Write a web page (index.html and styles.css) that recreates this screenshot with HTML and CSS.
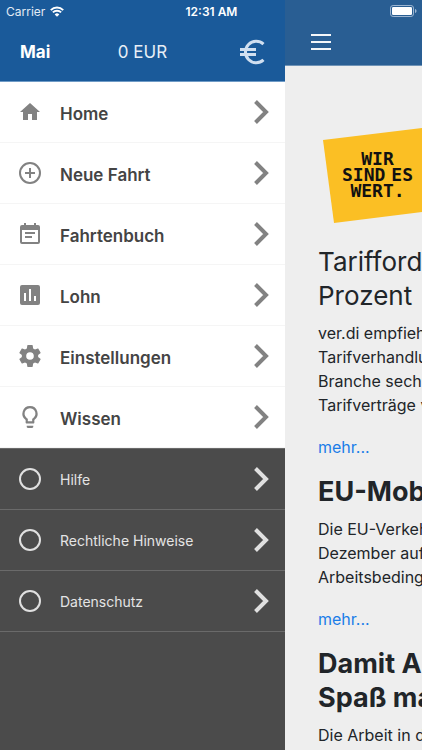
FILE: index.html
```html
<!DOCTYPE html>
<html lang="de">
<head>
<meta charset="utf-8">
<meta name="viewport" content="width=device-width, initial-scale=1">
<title>Home</title>
<link rel="stylesheet" href="styles.css">
</head>
<body>
<svg class="symbols" aria-hidden="true">
  <symbol id="chevron" viewBox="0 0 16 26"><path d="M2.5 2.5 13 13 2.5 23.5" fill="none" stroke="currentColor" stroke-width="4"/></symbol>
  <symbol id="ring" viewBox="0 0 24 24"><circle cx="12" cy="12" r="10" fill="none" stroke="currentColor" stroke-width="2"/></symbol>
</svg>
<div class="app">
  <div class="status">
    <span class="carrier">Carrier
      <svg width="14" height="11" viewBox="0 0 14 11" aria-hidden="true"><path d="M.8 4.1a8.8 8.8 0 0 1 12.4 0M2.9 6.4a5.8 5.8 0 0 1 8.2 0" fill="none" stroke="#fff" stroke-width="2"/><path d="M7 10.8 4.7 8.4a3.3 3.3 0 0 1 4.6 0z" fill="#fff"/></svg>
    </span>
    <span class="time">12:31 AM</span>
    <svg class="battery" width="27" height="12" viewBox="0 0 27 12" aria-hidden="true"><rect x=".5" y=".5" width="23" height="11" rx="2.6" fill="none" stroke="#9db6d2"/><rect x="2" y="2" width="20" height="8" rx="1.2" fill="#fff"/><path d="M25 4v4c2-.6 2-3.400 0-4z" fill="#9db6d2"/></svg>
  </div>

  <aside class="drawer">
    <header class="summary">
      <strong class="month">Mai</strong>
      <span class="amount">0 EUR</span>
      <svg class="euro" width="26" height="26" viewBox="0 0 26 26" aria-hidden="true"><path d="M24.500 5.200A10.700 10.700 0 1 0 24.500 20.800M1 10.500h16M1 15.500h16" fill="none" stroke="currentColor" stroke-width="3"/></svg>
    </header>
    <nav class="menu">
      <a class="item" href="#home">
        <svg class="icon" viewBox="0 0 24 24"><path d="M10 20v-6h4v6h5v-8h3L12 3 2 12h3v8z"/></svg>
        <span>Home</span><svg class="chevron"><use href="#chevron"/></svg>
      </a>
      <a class="item" href="#fahrt">
        <svg class="icon" viewBox="0 0 24 24"><path d="M13 7h-2v4H7v2h4v4h2v-4h4v-2h-4V7zm-1-6a11 11 0 1 0 0 22 11 11 0 0 0 0-22zm0 20a9 9 0 1 1 0-18 9 9 0 0 1 0 18z"/></svg>
        <span>Neue Fahrt</span><svg class="chevron"><use href="#chevron"/></svg>
      </a>
      <a class="item" href="#fahrtenbuch">
        <svg class="icon" viewBox="0 0 24 24"><path d="M17 10H7v2h10v-2zm3-7h-2V1h-2v2H8V1H6v2H4a2 2 0 0 0-2 2v15a2 2 0 0 0 2 2h16a2 2 0 0 0 2-2V5a2 2 0 0 0-2-2zm0 17H4V8h16v12zm-6-6H7v2h7v-2z"/></svg>
        <span>Fahrtenbuch</span><svg class="chevron"><use href="#chevron"/></svg>
      </a>
      <a class="item" href="#lohn">
        <svg class="icon" viewBox="0 0 24 24"><path d="M20 2H4a2 2 0 0 0-2 2v16a2 2 0 0 0 2 2h16a2 2 0 0 0 2-2V4a2 2 0 0 0-2-2zM8 18H6v-8h2v8zm5 0h-2V6h2v12zm5 0h-2v-5h2v5z"/></svg>
        <span>Lohn</span><svg class="chevron"><use href="#chevron"/></svg>
      </a>
      <a class="item" href="#einstellungen">
        <svg class="icon" viewBox="1 1 22 22"><path d="M19.430 12.980c.04-.32.070-.64.070-.98s-.03-.66-.07-.98l2.110-1.650c.19-.15.240-.42.120-.64l-2-3.460c-.12-.22-.39-.3-.61-.22l-2.490 1c-.52-.4-1.080-.73-1.690-.98l-.38-2.650C14.460 2.180 14.250 2 14 2h-4c-.25 0-.46.180-.49.420l-.38 2.650c-.61.250-1.170.590-1.690.980l-2.490-1c-.23-.09-.49 0-.61.220l-2 3.460c-.13.220-.07.490.12.640l2.110 1.650c-.04.320-.07.650-.07.980s.03.660.07.980l-2.110 1.650c-.19.150-.24.420-.12.640l2 3.460c.12.220.39.300.61.220l2.490-1c.52.400 1.080.730 1.690.980l.38 2.650c.03.240.24.420.49.420h4c.25 0 .46-.18.490-.42l.38-2.650c.61-.25 1.170-.59 1.690-.98l2.490 1c.23.090.49 0 .61-.22l2-3.460c.12-.22.070-.49-.12-.64l-2.110-1.650zM12 15.500a3.500 3.500 0 1 1 0-7 3.500 3.500 0 0 1 0 7z"/></svg>
        <span>Einstellungen</span><svg class="chevron"><use href="#chevron"/></svg>
      </a>
      <a class="item" href="#wissen">
        <svg class="icon" viewBox="1 1 22 22"><path d="M9 21c0 .55.450 1 1 1h4c.55 0 1-.45 1-1v-1H9v1zm3-19a7 7 0 0 0-4 12.740V17c0 .55.450 1 1 1h6c.55 0 1-.45 1-1v-2.260A7 7 0 0 0 12 2zm2.850 11.100-.85.600V16h-4v-2.300l-.85-.6a5 5 0 1 1 5.700 0z"/></svg>
        <span>Wissen</span><svg class="chevron"><use href="#chevron"/></svg>
      </a>
    </nav>
    <nav class="menu menu-dark">
      <a class="item" href="#hilfe"><svg class="icon"><use href="#ring"/></svg><span>Hilfe</span><svg class="chevron"><use href="#chevron"/></svg></a>
      <a class="item" href="#recht"><svg class="icon"><use href="#ring"/></svg><span>Rechtliche Hinweise</span><svg class="chevron"><use href="#chevron"/></svg></a>
      <a class="item" href="#datenschutz"><svg class="icon"><use href="#ring"/></svg><span>Datenschutz</span><svg class="chevron"><use href="#chevron"/></svg></a>
    </nav>
  </aside>

  <div class="page">
    <header class="topbar">
      <button class="toggle" type="button" aria-label="Menü"><i></i><i></i><i></i></button>
    </header>
    <main class="content">
      <div class="banner">
        <span>WIR</span>
        <span class="words"><span>SIND</span><span>ES</span></span>
        <span>WERT.</span>
      </div>
      <article>
        <h2 class="light">Tarifford<br>Prozent</h2>
        <p>ver.di empfieh<br>Tarifverhandlu<br>Branche sechs<br>Tarifverträge v</p>
        <a class="more" href="#tarif">mehr...</a>
      </article>
      <article>
        <h2>EU-Mob</h2>
        <p>Die EU-Verkeh<br>Dezember auf<br>Arbeitsbeding</p>
        <a class="more" href="#eu">mehr...</a>
      </article>
      <article>
        <h2>Damit A<br>Spaß ma</h2>
        <p>Die Arbeit in d</p>
      </article>
    </main>
  </div>
</div>
</body>
</html>
```
FILE: styles.css
```css
* { box-sizing: border-box; }

body {
  margin: 0;
  font-family: Inter, "Liberation Sans", sans-serif;
  font-size: 16px;
  color: #212529;
  background: #eee;
}

a { text-decoration: none; }

.symbols { position: absolute; width: 0; height: 0; }

.app {
  position: relative;
  display: flex;
  height: 100vh;
  overflow: hidden;
}

/* Status bar lies over both headers */
.status {
  position: absolute;
  inset: 0 0 auto;
  display: grid;
  grid-template-columns: 1fr auto 1fr;
  align-items: center;
  height: 22px;
  padding: 0 5px 0 6px;
  color: #fff;
  font-size: 12px;
}
.carrier { display: flex; align-items: center; gap: 5px; color: #e3ebf4; }
.time { font-weight: 600; }
.battery { justify-self: end; }

/* Drawer */
.drawer {
  flex: none;
  width: 285px;
  background: #4b4b4b;
}
.summary {
  display: grid;
  grid-template-columns: 1fr auto 1fr;
  align-items: center;
  height: 82px;
  padding: 22px 20px 0;
  background: #1a5a9a;
  border-bottom: 1px solid #6f9bc6;
  color: #fff;
}
.month { font-size: 17px; font-weight: 700; }
.amount { font-size: 17px; color: #e8eff6; }
.euro { justify-self: end; color: #d0dff0; }

.item {
  display: flex;
  align-items: center;
  gap: 18px;
  height: 61px;
  padding: 0 16px 0 18px;
  border-bottom: 1px solid #f5f5f5;
  color: #444;
  font-size: 17px;
  font-weight: 600;
}
.menu { background: #fff; }
.item span { flex: 1; padding-top: 4px; }
.icon { width: 24px; height: 24px; fill: #828282; }
.chevron { width: 16px; height: 26px; color: #828282; }

.menu-dark {
  background: #4b4b4b;
  border-top: 1px solid #6a6a6a;
}
.menu-dark .item {
  border-color: #6a6a6a;
  color: #e4e4e4;
  font-size: 14px;
  font-weight: 400;
}
.menu-dark .item span { padding-top: 0; }
.menu-dark .icon,
.menu-dark .chevron { color: #e0e0e0; }

/* Page behind the drawer */
.page {
  flex: 1;
  min-width: 0;
  overflow: hidden;
  background: #eee;
}
.topbar {
  height: 66px;
  padding: 34px 26px 0;
  background: #295e93;
  border-bottom: 1px solid #6f93b6;
}
.toggle {
  display: flex;
  flex-direction: column;
  gap: 5px;
  width: 20px;
  padding: 0;
  border: 0;
  background: none;
}
.toggle i { height: 2px; background: #f4f7fa; }

.content {
  padding: 62px 0 0 33px;
  white-space: nowrap;
}
.banner {
  display: flex;
  flex-direction: column;
  align-items: center;
  height: 95px;
  margin: 0 0 22px 5px;
  padding: 23px 0 0 10px;
  background: #fbbf24;
  clip-path: polygon(0 12px, 100% 0, 100% 84px, 11px 100%);
  color: #111;
  font-family: "DejaVu Sans Mono", monospace;
  font-size: 18px;
  font-weight: 700;
  line-height: 16px;
}
.words { display: flex; gap: 6px; }

h2 {
  margin: 0 0 8px;
  font-size: 27px;
  font-weight: 700;
  line-height: 34px;
}
h2.light { font-size: 26px; font-weight: 400; }
p { margin: 0 0 18px; line-height: 24px; }
.more {
  display: block;
  margin-bottom: 16px;
  color: #1a7de8;
  line-height: 24px;
}
```
